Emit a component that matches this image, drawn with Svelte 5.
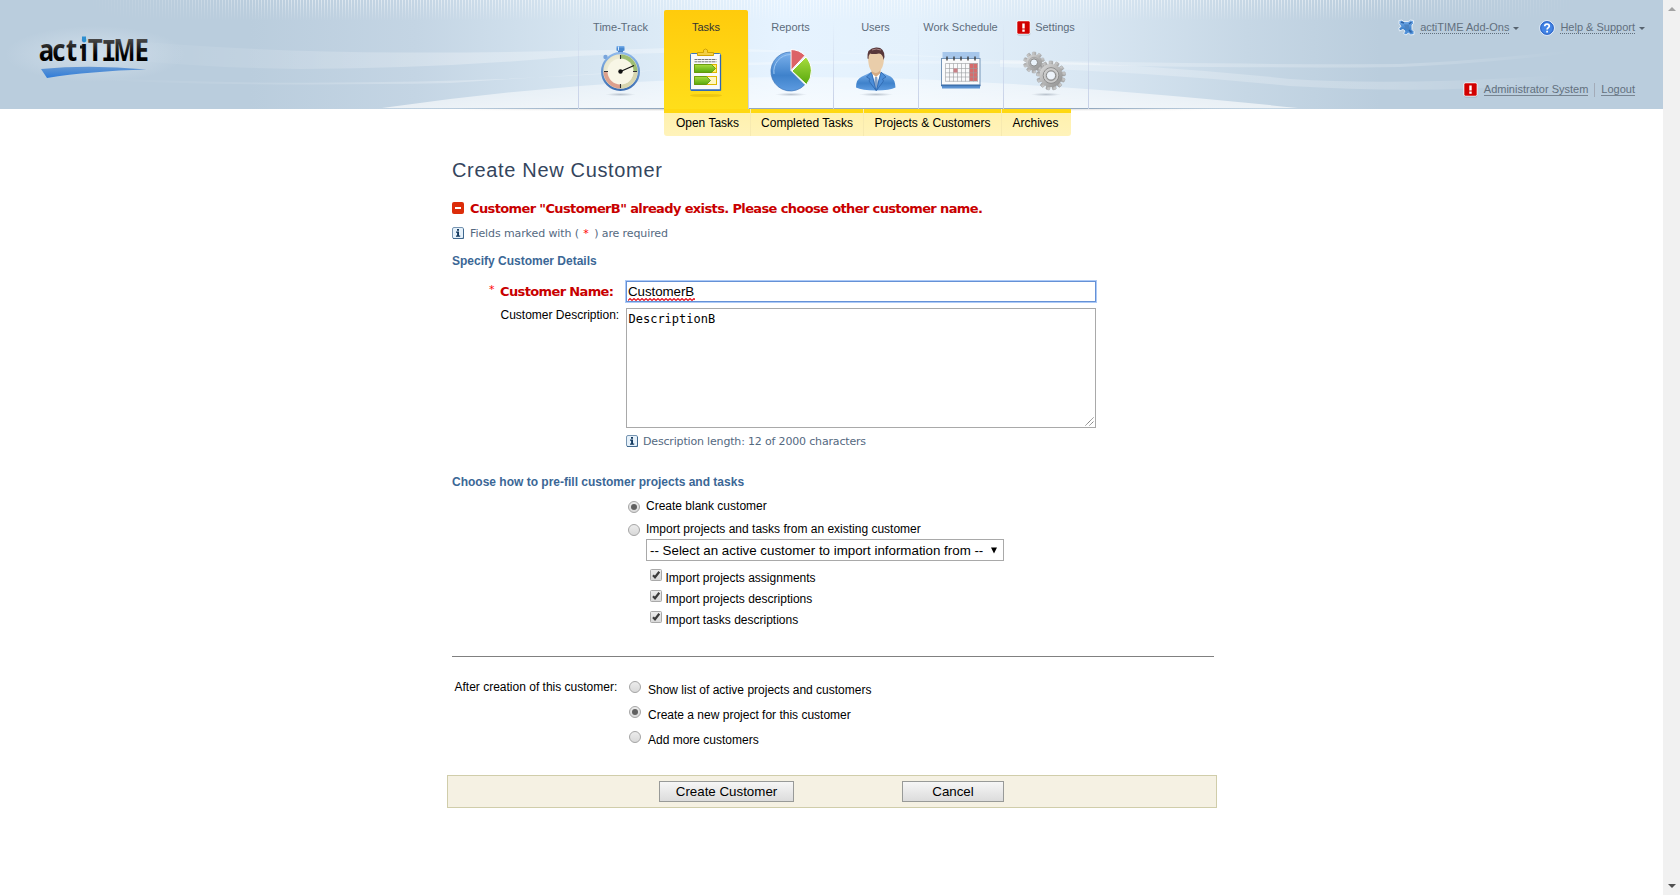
<script>
  const tabs = [
    { id: 'time', label: 'Time-Track' },
    { id: 'tasks', label: 'Tasks', active: true },
    { id: 'reports', label: 'Reports' },
    { id: 'users', label: 'Users' },
    { id: 'schedule', label: 'Work Schedule' },
    { id: 'settings', label: 'Settings', alert: true }
  ];
  const subItems = [
    { label: 'Open Tasks', width: 86 },
    { label: 'Completed Tasks', width: 113 },
    { label: 'Projects & Customers', width: 138 },
    { label: 'Archives', width: 70 }
  ];
  const imports = ['Import projects assignments', 'Import projects descriptions', 'Import tasks descriptions'];
  const afterOptions = [
    { label: 'Show list of active projects and customers', on: false },
    { label: 'Create a new project for this customer', on: true },
    { label: 'Add more customers', on: false }
  ];
  const teeth = (n) => Array.from({ length: n }, (_, i) => (i * 360) / n);
</script>

{#snippet alertIcon()}
  <svg class="alert" width="15" height="16" viewBox="0 0 15 16">
    <rect x="1" y="1.6" width="13.4" height="14" rx="2" fill="#7f91a3" opacity=".5" />
    <rect x=".5" y=".5" width="14" height="14" rx="2" fill="#fff" />
    <rect x="1.3" y="1.3" width="12.4" height="12.4" rx="1.2" fill="#d10000" />
    <path d="M6.3 3.5h2.4v5H6.3zM6.3 9.6h2.4v2.2H6.3z" fill="#fff" />
  </svg>
{/snippet}

{#snippet infoIcon()}
  <svg class="ico12" width="12" height="12" viewBox="0 0 12 12">
    <rect x=".5" y=".5" width="11" height="11" rx="1.5" fill="#e6f1fa" stroke="#7795b2" />
    <path d="M11.5 2v9.5H1" fill="none" stroke="#3f688f" />
    <path d="M5 2h2v1.7H5zM4 4.6h3V8.5h1.2v1.2H4V8.5h1.1V5.8H4z" fill="#12395f" />
  </svg>
{/snippet}

{#snippet radio(on)}
  <svg class="ico12" width="12" height="12" viewBox="0 0 12 12">
    <circle cx="6" cy="6" r="5.5" fill="url(#ctl)" stroke="#a5a5a5" />
    {#if on}<circle cx="6" cy="6" r="3" fill="#606060" />{/if}
  </svg>
{/snippet}

{#snippet icon(id)}
  {#if id === 'time'}
    <svg width="60" height="56" viewBox="0 0 60 56">
      <ellipse cx="29.5" cy="51.5" rx="15" ry="1.7" fill="url(#shadow)" />
      <rect x="25.5" y="3" width="8" height="5" rx=".8" fill="url(#blue)" />
      <rect x="27" y="7.5" width="5" height="3" fill="#4c7fc0" />
      <path d="M27.5 3.5v4" stroke="#d5e8fb" />
      <circle cx="14.5" cy="14" r="2.2" fill="#78a5dc" />
      <path d="M15 14.500l2.500 2.500" stroke="#78a5dc" stroke-width="2" />
      <circle cx="29.500" cy="28.500" r="18.400" fill="url(#cream)" stroke="url(#ring)" stroke-width="2.200" />
      <path d="M29.500 28.500V11.500A17 17 0 0 1 46.500 28.500z" fill="#89b25b" opacity=".8" />
      <path d="M29.500 28.500V45.500A17 17 0 0 1 12.500 28.500z" fill="#d99381" opacity=".85" />
      <path d="M29.500 45.500A17 17 0 0 0 46.500 28.500h-4A13 13 0 0 1 29.500 41.500z" fill="#d8d6b0" />
      <circle cx="29.500" cy="28.500" r="13" fill="#f8f6e6" />
      <path d="M29.500 12v4M29.500 41v4M13 28.500h4M42 28.500h4" stroke="#333" stroke-width="1.100" />
      <path d="M29.500 28.500L43 22.500" stroke="#111" stroke-width="1.300" />
      <circle cx="29.500" cy="28.500" r="2.200" fill="#111" />
    </svg>
  {:else if id === 'tasks'}
    <svg width="60" height="56" viewBox="0 0 60 56">
      <ellipse cx="30" cy="52.500" rx="16" ry="1.600" fill="#c49a00" opacity=".3" />
      <rect x="14.500" y="10.500" width="30" height="37" rx="1" fill="#f9f9f9" stroke="#3f78be" />
      <path d="M15 47h29.500V12" fill="none" stroke="#2f68b5" stroke-width="1.300" />
      <path d="M18.500 16.500h22M18.500 18.800h22" stroke="#777" stroke-width="1" stroke-dasharray="3 .5" />
      <rect x="18.500" y="21.500" width="22" height="8" fill="#ffef6a" stroke="#ddb800" />
      <rect x="18.500" y="33.500" width="22" height="8" fill="#fff6c0" stroke="#ddb800" />
      <path d="M18.500 21.500h17l4 4-4 4h-17z" fill="url(#green)" stroke="#55920c" stroke-width=".8" />
      <path d="M18.500 33.500h12l4 4-4 4h-12z" fill="url(#green)" stroke="#55920c" stroke-width=".8" />
      <path d="M21.500 12.500V9.500h6V7q2-2 4 0v2.500h6v3z" fill="#f3cf45" stroke="#d3a400" />
    </svg>
  {:else if id === 'reports'}
    <svg width="60" height="56" viewBox="0 0 60 56">
      <ellipse cx="30" cy="51.500" rx="16" ry="1.700" fill="url(#shadow)" />
      <path d="M29.500 9A19.500 19.500 0 1 0 43.500 42L29.500 28z" fill="url(#blue)" stroke="#3c74b8" stroke-width=".7" />
      <path d="M29.500 11.500A17 17 0 0 0 13 31" fill="none" stroke="#9cc6f1" />
      <path d="M30 6.500A20.500 20.500 0 0 1 44 12.500L30 27.500z" fill="#dc6267" stroke="#fff" />
      <path d="M45 14A21 21 0 0 1 45.500 41.500L31 28z" fill="url(#green)" stroke="#fff" />
    </svg>
  {:else if id === 'users'}
    <svg width="60" height="56" viewBox="0 0 60 56">
      <ellipse cx="30" cy="51.500" rx="17" ry="1.700" fill="url(#shadow)" />
      <path d="M10 44.500Q10 36 16 33.500L25.500 29H35L44.500 33.500Q49 36 49.500 44.500Q44 47.500 30 47.500T10 44.500z" fill="url(#blue)" />
      <path d="M25.500 28.500L30 45 35 28.500z" fill="#fff" />
      <path d="M29 34h2.200L32 41l-2 5-2-5z" fill="#86a3c8" />
      <path d="M25.500 29L20.500 34l3.500 2-1 2 7 9.500zM35 29l5 5-3.500 2 1 2-7 9.500z" fill="#4b8dd8" stroke="#2a62a8" stroke-width=".7" />
      <path d="M25.500 22h9v8l-4.500 4-4.500-4z" fill="#d5ab84" />
      <path d="M22 12Q22 7 30 7t8 6q0 10-3 13.500t-5.500 3.500-5-3.500T22 12z" fill="#e9cdaa" />
      <path d="M21.500 15.500Q20.500 5 30 4.500 38.500 4 38.500 14l-1 3Q37 11 33 10.500 27 11.500 24 10.500 22.500 12 22.500 16z" fill="#57373a" />
      <path d="M26 7q4-2 9 0" stroke="#a88383" fill="none" />
    </svg>
  {:else if id === 'schedule'}
    <svg width="60" height="56" viewBox="0 0 60 56">
      <rect x="11.500" y="9" width="37" height="9" fill="#a7c7eb" />
      <rect x="11" y="41" width="38" height="4.500" fill="#5d93d2" />
      <rect x="10.500" y="15.500" width="38.500" height="26.500" fill="#f9fafb" stroke="#7595b8" />
      <path d="M10 42.500h39.500" stroke="#3c71ae" stroke-width="1.500" />
      <rect x="38.500" y="20.500" width="8" height="17.500" fill="#d66c6c" />
      <path d="M14.500 20.500h32.500M14.500 25.500h32.500M14.500 29.800h32.500M14.500 34h32.500M14.500 38.300h32.500M14.500 20.500v18M18.500 20.500v18M22.500 20.500v18M26.500 20.500v18M30.500 20.500v18M34.500 20.500v18M38.500 20.500v18M42.500 20.500v18M46.500 20.500v18" stroke="#999c9f" stroke-width=".6" fill="none" />
      <rect x="22.500" y="25.500" width="4" height="4" fill="#c98085" />
      <path d="M16 13.500v4M23 13.500v4M30 13.500v4M37 13.500v4M44 13.500v4" stroke="#333" stroke-width="1.300" />
    </svg>
  {:else}
    <svg width="60" height="56" viewBox="0 0 60 56">
      <ellipse cx="30" cy="51.500" rx="15" ry="1.700" fill="url(#shadow)" />
      {#each teeth(10) as a}<rect x="16.300" y="9" width="3.600" height="5" rx=".8" fill="url(#metal)" stroke="#999" stroke-width=".4" transform="rotate({a} 18 19.500)" />{/each}
      <circle cx="18" cy="19.500" r="8" fill="url(#metal)" />
      <circle cx="18" cy="19.500" r="5.200" fill="none" stroke="#a0a0a0" stroke-width=".8" />
      <circle cx="18" cy="19.500" r="3.600" fill="#e9f2fa" stroke="#888" />
      {#each teeth(13) as a}<rect x="33" y="18" width="3.800" height="6" rx=".8" fill="url(#metal)" stroke="#888" stroke-width=".4" transform="rotate({a} 35 32.500)" />{/each}
      <circle cx="35" cy="32.500" r="11.500" fill="url(#metal)" />
      <circle cx="35" cy="32.500" r="7.800" fill="none" stroke="#8a8a8a" stroke-width="1" />
      <circle cx="35" cy="32.500" r="6.500" fill="none" stroke="#ccc" stroke-width="1.500" />
      <circle cx="35" cy="32.500" r="4.600" fill="#edf3fa" stroke="#888" />
    </svg>
  {/if}
{/snippet}

<svg class="defs" width="0" height="0">
  <defs>
    <linearGradient id="ctl" x2="0" y2="1"><stop stop-color="#ededed" /><stop offset="1" stop-color="#d8d8d8" /></linearGradient>
    <linearGradient id="blue" x2="0" y2="1"><stop stop-color="#7db2ed" /><stop offset=".6" stop-color="#3f82cb" /><stop offset="1" stop-color="#5d9be0" /></linearGradient>
    <linearGradient id="ring" x2="0" y2="1"><stop stop-color="#8fb9eb" /><stop offset="1" stop-color="#3d6fb3" /></linearGradient>
    <linearGradient id="green" x2="0" y2="1"><stop stop-color="#a9dd3f" /><stop offset="1" stop-color="#57a80d" /></linearGradient>
    <linearGradient id="metal" x2="1" y2="1"><stop stop-color="#dcdcdc" /><stop offset="1" stop-color="#8c8c8c" /></linearGradient>
    <radialGradient id="cream"><stop stop-color="#fffef5" /><stop offset="1" stop-color="#e6e4c8" /></radialGradient>
    <radialGradient id="shadow"><stop stop-color="#8d99a8" stop-opacity=".55" /><stop offset="1" stop-color="#8d99a8" stop-opacity="0" /></radialGradient>
  </defs>
</svg>

<div class="page">
  <div class="content">
    <header>
      <svg class="backdrop" width="1663" height="115" viewBox="0 0 1663 115">
        <defs>
          <linearGradient id="sky" x1="0" x2="1663" y2="0" gradientUnits="userSpaceOnUse">
            <stop stop-color="#bacddd" /><stop offset=".15" stop-color="#bacddd" /><stop offset=".25" stop-color="#c4d5e4" />
            <stop offset=".35" stop-color="#d6e5f1" /><stop offset=".47" stop-color="#e6f3ff" /><stop offset=".55" stop-color="#e4f1fc" />
            <stop offset=".65" stop-color="#d9e7f3" /><stop offset=".75" stop-color="#c6d7e5" /><stop offset=".83" stop-color="#bacddd" /><stop offset="1" stop-color="#bacddd" />
          </linearGradient>
          <pattern id="bars" width="3" height="21" patternUnits="userSpaceOnUse"><rect width="1" height="21" fill="#fff" /></pattern>
          <linearGradient id="down" x2="0" y2="1"><stop stop-color="#fff" /><stop offset="1" stop-color="#fff" stop-opacity="0" /></linearGradient>
          <mask id="fade"><rect width="1663" height="21" fill="url(#down)" /></mask>
          <linearGradient id="across" x1="85" x2="1580" y2="0" gradientUnits="userSpaceOnUse">
            <stop stop-color="#fff" stop-opacity="0" /><stop offset=".15" stop-color="#fff" stop-opacity=".5" />
            <stop offset=".85" stop-color="#fff" stop-opacity=".5" /><stop offset="1" stop-color="#fff" stop-opacity="0" />
          </linearGradient>
          <mask id="acrossMask"><rect width="1663" height="21" fill="url(#across)" /></mask>
          <linearGradient id="mound" x2="0" y2="1"><stop stop-color="#fff" stop-opacity=".4" /><stop offset="1" stop-color="#fff" stop-opacity=".65" /></linearGradient>
          <linearGradient id="edge"><stop stop-color="#9fb5c9" stop-opacity="0" /><stop offset=".25" stop-color="#94a9bf" /><stop offset=".8" stop-color="#94a9bf" /><stop offset="1" stop-color="#9fb5c9" stop-opacity="0" /></linearGradient>
          <linearGradient id="under"><stop stop-color="#c9c9c9" stop-opacity="0" /><stop offset=".3" stop-color="#c9c9c9" stop-opacity=".7" /><stop offset=".7" stop-color="#c9c9c9" stop-opacity=".7" /><stop offset="1" stop-color="#c9c9c9" stop-opacity="0" /></linearGradient>
          <radialGradient id="glow"><stop stop-color="#d8e4ee" stop-opacity=".75" /><stop offset="1" stop-color="#d8e4ee" stop-opacity="0" /></radialGradient>
          <linearGradient id="leftWave"><stop stop-color="#fff" stop-opacity="0" /><stop offset=".4" stop-color="#fff" stop-opacity=".28" /><stop offset=".7" stop-color="#fff" stop-opacity=".3" /><stop offset="1" stop-color="#fff" stop-opacity=".15" /></linearGradient>
          <linearGradient id="rightWave"><stop stop-color="#fff" stop-opacity=".25" /><stop offset=".7" stop-color="#fff" stop-opacity=".2" /><stop offset="1" stop-color="#fff" stop-opacity="0" /></linearGradient>
        </defs>
        <rect width="1663" height="109" fill="url(#sky)" />
        <g mask="url(#fade)"><rect width="1663" height="21" fill="url(#bars)" mask="url(#acrossMask)" /></g>
        <ellipse cx="95" cy="54" rx="90" ry="28" fill="url(#glow)" />
        <path d="M110 39Q250 52 400 52.500T700 47L1000 60Q800 46 578 56 450 68 300 69 200 68 110 58z" fill="url(#leftWave)" />
        <path d="M95 78Q250 85 420 81.500T748 62.500Q900 59 1100 63L1100 65Q900 62 748 65 600 73 450 83 250 87 95 80z" fill="url(#leftWave)" />
        <path d="M1000 60Q1250 65 1400 64 1480 61 1572 50V53Q1480 64 1400 67 1250 69 1000 63z" fill="url(#rightWave)" />
        <path d="M1000 60Q1140 63 1290 79 1400 86 1560 75V82Q1440 95 1290 86 1150 72 1000 67z" fill="url(#rightWave)" />
        <path d="M382 108Q600 77 800 77T1298 108z" fill="url(#mound)" />
        <rect x="380" y="108" width="890" height="1" fill="url(#edge)" />
        <rect x="460" y="109" width="750" height="1" fill="url(#under)" />
        <rect x="460" y="110" width="750" height="1" fill="url(#under)" opacity=".35" />
      </svg>

      <svg class="logo" width="130" height="60" viewBox="30 30 130 60">
        <defs>
          <linearGradient id="ink" x1="0" x2="0" y1="39" y2="62" gradientUnits="userSpaceOnUse"><stop stop-color="#484848" /><stop offset=".7" stop-color="#000" /></linearGradient>
          <linearGradient id="inkI" x1="0" x2="0" y1="43" y2="43.100" gradientUnits="userSpaceOnUse"><stop stop-color="#2f8fd0" /><stop offset="1" stop-color="#0c0c0c" /></linearGradient>
          <linearGradient id="swoosh" x2="0" y2="1"><stop stop-color="#6397d4" /><stop offset="1" stop-color="#2f7cd9" /></linearGradient>
        </defs>
        <text transform="scale(.87 1)" y="61" font-family="Open Sans" font-weight="700" font-size="29.500" fill="url(#ink)" x="44.600 60 76"
          >act<tspan x="92" fill="url(#inkI)">i</tspan><tspan x="101">T</tspan><tspan x="116.500" font-family="DejaVu Sans Mono" font-size="29">I</tspan><tspan x="130.500" textLength="25" lengthAdjust="spacingAndGlyphs">M</tspan><tspan x="154.500">E</tspan></text>
        <rect x="82" y="36.500" width="4" height="4.500" fill="#2f8fd0" />
        <path d="M80 45.500h3v3h-3z" fill="#161616" />
        <path d="M41 69Q90 64.500 146.500 69.500 90 71 47 78z" fill="url(#swoosh)" />
      </svg>

      <nav class="tabs">
        {#each tabs as t}
          <div class="tab" class:active={t.active}>
            <span class="label">{#if t.alert}{@render alertIcon()}{/if}{t.label}</span>
            <div class="pic">{@render icon(t.id)}</div>
          </div>
        {/each}
      </nav>

      <div class="account">
        <div class="line top">
          <svg width="17" height="17" viewBox="0 0 17 17">
            <path d="M1 1.500l3-.5 1.500 1.500h5L12.500 1l3 .5v3L14 6v4.500l2 2v3l-3.500.500-2-2L8 16l-2.500-1.500 1.500-2.500-2-1.500-3.500 1.500L.8 9 3 7.500 1 4.500z" fill="url(#blue)" stroke="#e3edf6" stroke-width="1" />
            <path d="M3 3l3 1M13.500 3L11 5M13.500 13.500L11 11" stroke="#2c62a5" stroke-width="1.500" />
            <path d="M6 5.500h5v5H8z" fill="#4b83c2" />
          </svg>
          <span class="dotted">actiTIME Add-Ons</span><i class="caret"></i>
          <svg class="help" width="16" height="16" viewBox="0 0 16 16">
            <circle cx="8" cy="8" r="7.300" fill="#4284e6" stroke="#e8f0fa" />
            <circle cx="8" cy="8" r="6.300" fill="none" stroke="#2c62c1" />
            <path d="M5.700 6.300Q5.800 4.200 8 4.200T10.300 6.200C10.300 7.700 8.100 7.700 8.100 9.600M8.100 10.800v1.800" fill="none" stroke="#fff" stroke-width="1.700" />
          </svg>
          <span class="dotted">Help &amp; Support</span><i class="caret"></i>
        </div>
        <div class="line bottom">
          {@render alertIcon()}
          <span class="solid admin">Administrator System</span>
          <i class="sep"></i>
          <span class="solid">Logout</span>
        </div>
      </div>
    </header>

    <nav class="sub">
      {#each subItems as s}
        <span style="width: {s.width}px">{s.label}</span>
      {/each}
    </nav>

    <main>
      <h1>Create New Customer</h1>
      <div class="error">
        <svg class="ico12" width="12" height="12" viewBox="0 0 12 12"><rect width="12" height="12" rx="2" fill="#dc2d0a" /><path d="M3 5h6v2H3z" fill="#fff" /></svg>
        <span>Customer "CustomerB" already exists. Please choose other customer name.</span>
      </div>
      <div class="note">{@render infoIcon()}<span>Fields marked with ( <b>*</b> ) are required</span></div>
      <h2>Specify Customer Details</h2>

      <div class="field name">
        <div class="caption"><sup>*</sup><strong>Customer Name:</strong></div>
        <div class="input">
          <span class="misspelled">CustomerB
            <svg width="67" height="3" viewBox="0 0 67 3"><path d={'M0 2.500' + 'l2-2l2 2'.repeat(17)} fill="none" stroke="#e8101c" stroke-width="1.100" /></svg>
          </span>
        </div>
      </div>
      <div class="field desc">
        <div class="caption plain">Customer Description:</div>
        <div class="textarea">DescriptionB
          <svg width="9" height="9" viewBox="0 0 9 9"><path d="M.5 8.500l8-8M4.500 8.500l4-4" stroke="#666" stroke-width=".9" stroke-dasharray="1.400 .3" /></svg>
        </div>
      </div>
      <div class="note length">{@render infoIcon()}<span>Description length: 12 of 2000 characters</span></div>

      <h2 class="prefill">Choose how to pre-fill customer projects and tasks</h2>
      <div class="choice first">{@render radio(true)}<span>Create blank customer</span></div>
      <div class="choice second">{@render radio(false)}<span>Import projects and tasks from an existing customer</span></div>
      <div class="select"><span>-- Select an active customer to import information from --</span>
        <svg width="6" height="7" viewBox="0 0 6 7"><path d="M0 .5h6L3 6.500z" fill="#000" /></svg>
      </div>
      <div class="checks">
        {#each imports as item}
          <div class="check">
            <svg width="12" height="12" viewBox="0 0 12 12"><rect x=".5" y=".5" width="11" height="11" rx="1" fill="url(#ctl)" stroke="#a9a9a9" /><path d="M3 6.200L5 8.300 9.300 2.800" fill="none" stroke="#3c3c3c" stroke-width="2.200" /></svg>
            <span>{item}</span>
          </div>
        {/each}
      </div>

      <div class="rule"></div>

      <div class="after">
        <span class="afterLabel">After creation of this customer:</span>
        <div class="options">
          {#each afterOptions as o}
            <div class="option">{@render radio(o.on)}<span>{o.label}</span></div>
          {/each}
        </div>
      </div>

      <div class="actions">
        <div class="button create">Create Customer</div>
        <div class="button cancel">Cancel</div>
      </div>
    </main>
  </div>
  <aside class="scroll"><i class="up"></i><i class="down"></i></aside>
</div>

<style>
  :global(body) { overflow: hidden; background: #fff; }
  .page { display: flex; height: 895px; width: 1680px; font: 12px/16px "Liberation Sans", Arial, sans-serif; color: #000; }
  .defs { position: absolute; }
  .content { width: 1663px; }
  .scroll { width: 17px; background: #f1f1f1; display: flex; flex-direction: column; align-items: center; justify-content: space-between; padding: 7px 0; box-sizing: border-box; }
  .up, .down { border: 4px solid transparent; height: 0; width: 0; border-top: 0; border-bottom: 4px solid #a3a3a3; }
  .down { border-top: 4px solid #505050; border-bottom: 0; }
  svg { flex: none; display: block; }
  header { position: relative; height: 109px; display: flex; }
  .backdrop { position: absolute; left: 0; top: 0; }
  .logo { position: relative; margin: 30px 0 0 30px; }
  .tabs { position: relative; display: flex; margin-left: 418px; }
  .tab { width: 85px; height: 109px; box-sizing: border-box; padding-top: 19px; text-align: center; font-size: 11px; color: #5d6c7c; background: linear-gradient(rgba(190,203,230,0) 20px, #c5cfe6) left / 1px 100% no-repeat; }
  .tab:last-child { width: 86px; padding-right: 1px; background: linear-gradient(rgba(190,203,230,0) 20px, #c5cfe6) left / 1px 100% no-repeat, linear-gradient(rgba(190,203,230,0) 20px, #c5cfe6) right / 1px 100% no-repeat; }
  .tab.active { color: #333; margin: 10px 0 0 1px; padding-top: 9px; height: 103px; background: linear-gradient(#ffcb0c, #ffdf1b); border-radius: 2px 2px 0 0; width: 84px; }
  .label { display: flex; justify-content: center; align-items: flex-start; height: 16px; gap: 4px; }
  .alert { margin-top: 1px; }
  .pic { display: flex; justify-content: center; padding-top: 8px; }
  .account { position: relative; margin-left: auto; padding-right: 18px; font-size: 11px; color: #62707d; }
  .line { display: flex; justify-content: flex-end; height: 19px; }
  .top { padding-top: 19px; }
  .top > span { margin-left: 5px; height: 14px; }
  .dotted { border-bottom: 1px dotted #62707d; line-height: 16px; }
  .caret { border: 3px solid transparent; border-top-color: #57636f; border-bottom: 0; height: 0; margin: 8px 0 0 4px; }
  .help { margin: 1px 0 0 20px; }
  .bottom { margin-top: 43px; padding-right: 10px; }
  .solid { border-bottom: 1px solid #788592; height: 14px; line-height: 16px; }
  .admin { margin-left: 6px; }
  .sep { width: 1px; height: 14px; margin: 2px 6px 0; background: #a3abb8; }
  .sub { position: relative; display: flex; margin-left: 664px; width: 407px; height: 27px; background: linear-gradient(#ffd811 4px, #fff1ae 4px, #fff3ba); border-radius: 0 0 3px 3px; }
  .sub span { box-sizing: border-box; text-align: center; padding-top: 6px; line-height: 16px; white-space: nowrap; }
  .sub span + span { border-left: 1px solid #f7eab0; }
  .sub span:first-child { padding-left: 1px; }
  .sub span:last-child { padding-right: 2px; }
  main { padding-left: 452px; }
  h1 { margin: 22px 0 0; font-size: 20px; line-height: 24px; font-weight: 400; color: #34455d; letter-spacing: .67px; }
  .error { display: flex; align-items: center; gap: 6px; margin-top: 17px; height: 18px; font: bold 13px/18px "DejaVu Sans", Verdana, sans-serif; color: #c80000; letter-spacing: -.63px; white-space: nowrap; }
  .error span { padding-top: 2px; }
  .note { display: flex; align-items: center; gap: 6px; margin-top: 7px; height: 18px; font: 11px/18px "DejaVu Sans", Verdana, sans-serif; color: #54697f; letter-spacing: -.1px; }
  .note span { padding-top: 1px; }
  .note b { color: #f00; font-weight: 400; margin: 0 2px 0 1px; }
  h2 { margin: 11px 0 0; font-size: 12px; line-height: 16px; font-weight: 700; color: #3b6796; }
  .field { display: flex; }
  .name { margin-top: 12px; height: 21px; }
  .caption { width: 174px; display: flex; box-sizing: border-box; padding-left: 37px; }
  .caption sup { font: 11px/18px "DejaVu Sans", sans-serif; color: #f00; width: 11px; }
  .caption strong { font: bold 13px/21px "DejaVu Sans", Verdana, sans-serif; color: #c80000; white-space: nowrap; letter-spacing: -.63px; }
  .input { width: 470px; height: 21px; box-sizing: border-box; border: 1px solid #6591d6; box-shadow: 0 0 0 1px #adcaf7; padding: 1px; font-size: 13.330px; line-height: 17px; letter-spacing: -.05px; }
  .misspelled { position: relative; display: inline-block; }
  .misspelled svg { position: absolute; left: 0; bottom: -1px; }
  .desc { margin-top: 6px; height: 120px; }
  .plain { padding-left: 48.500px; white-space: nowrap; line-height: 14px; }
  .textarea { position: relative; width: 470px; height: 120px; box-sizing: border-box; border: 1px solid #a9a9a9; padding: 3px 2px 2px 1.500px; font: 12px/15px "DejaVu Sans Mono", monospace; }
  .textarea svg { position: absolute; right: 1px; bottom: 1px; }
  .length { margin: 4px 0 0 174px; gap: 5px; letter-spacing: -.17px; }
  .prefill { margin-top: 24px; }
  .choice { display: flex; margin-left: 176px; height: 16px; }
  .choice span { margin-left: 6px; }
  .choice svg { margin-top: 3px; }
  .first { margin-top: 8px; }
  .second { margin-top: 7px; }
  .select { display: flex; align-items: center; justify-content: space-between; box-sizing: border-box; width: 358px; height: 22px; margin: 2px 0 0 194px; border: 1px solid #a9a9a9; padding: 0 6px 0 3px; font-size: 13.330px; white-space: nowrap; }
  .select span { padding-top: 2px; }
  .checks { margin: 8px 0 0 198px; }
  .check { display: flex; height: 21px; }
  .check span { margin: 1px 0 0 3.500px; }
  .rule { width: 762px; height: 1px; background: #808080; margin-top: 24px; }
  .after { display: flex; margin-top: 22px; padding-left: 2.500px; height: 96px; }
  .afterLabel { width: 174.500px; }
  .option { display: flex; height: 25px; }
  .option svg { margin-top: 2px; }
  .option span { margin: 3px 0 0 7px; }
  .actions { display: flex; box-sizing: border-box; margin-left: -5px; width: 770px; height: 33px; border: 1px solid #d0cdaa; background: #f5f1e3; padding: 5px 0 0 211px; }
  .button { box-sizing: border-box; height: 21px; border: 1px solid #989a98; background: linear-gradient(#f6f6f6, #dcdcdc); text-align: center; font-size: 13.330px; line-height: 19px; }
  .create { width: 135px; }
  .cancel { width: 102px; margin-left: 108px; }
</style>
